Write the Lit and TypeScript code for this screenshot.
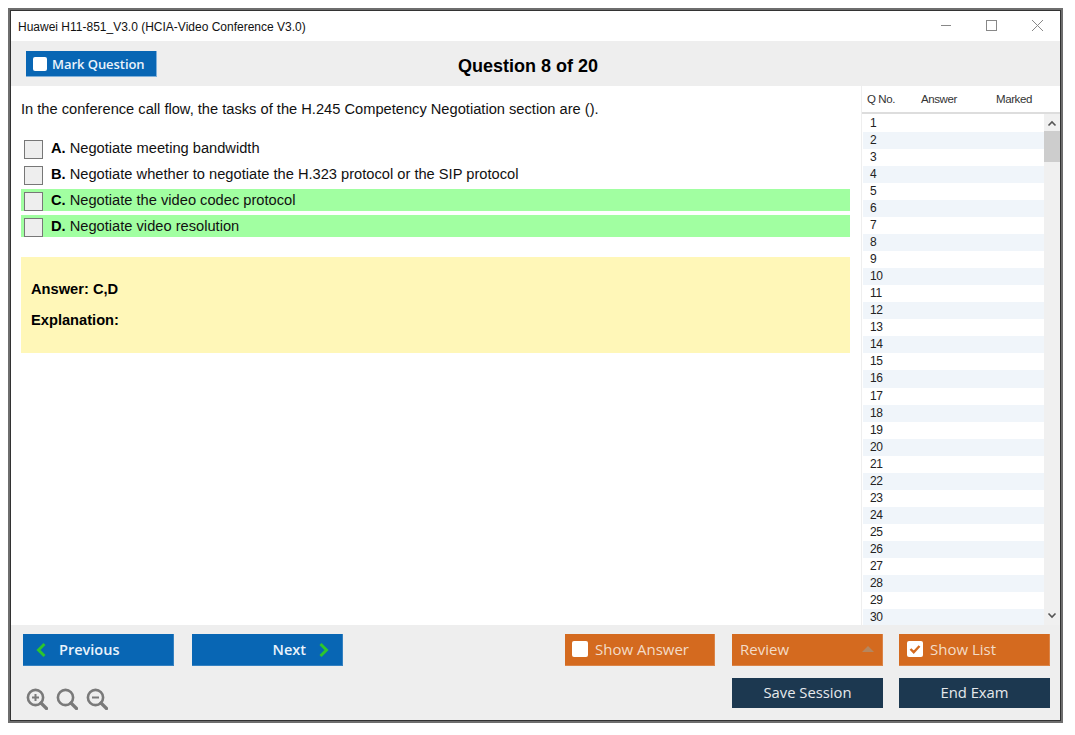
import { LitElement, html, css, svg } from "lit";
import { customElement } from "lit/decorators.js";

const magnifier = (inner: unknown) => html`<svg class="zi" width="22" height="22" viewBox="0 0 22 22" fill="none" stroke="#7a7a7a">
  <circle cx="9.5" cy="9.5" r="7.6" stroke-width="2.6"></circle>
  <path d="M15 15l5.5 5.5" stroke-width="3.2" stroke-linecap="round"></path>${inner}</svg>`;

@customElement("app-root")
export class AppRoot extends LitElement {
  static styles = css`
    :host { display: block; width: 1075px; height: 735px; background: #fff; padding: 8px 0 0 8px; box-sizing: border-box; font-family: "Liberation Sans", Arial, sans-serif; color: #111; }
    * { box-sizing: border-box; }
    .frame { width: 1055px; height: 715px; border: 2px solid #6e6e6e; }
    .win { width: 100%; height: 100%; border: 1px solid #333; display: flex; flex-direction: column; background: #fff; }
    .title { height: 30px; flex: none; display: flex; align-items: center; justify-content: space-between; padding-left: 7px; font-size: 12px; background: #fff; }
    .tt { padding-top: 2px; }
    .wc { display: flex; align-items: center; }
    .wc svg { display: block; width: 46px; height: 30px; }
    .top { height: 45px; flex: none; background: #eee; display: flex; align-items: flex-start; padding: 10px 0 0 15px; }
    .mark { width: 131px; height: 26px; flex: none; background: #0866b4; border: 1px solid #7fb0da; border-width: 0 1px 1px 0; color: #eaf3fb; display: flex; align-items: center; gap: 5px; padding-left: 7px; font: 600 13px "Open Sans", sans-serif; letter-spacing: -0.05px; }
    .cb { width: 14px; height: 14px; border-radius: 2px; background: #fff; flex: none; display: block; }
    .heading { flex: 1; margin-top: 5px; padding-right: 161px; text-align: center; font-size: 18px; font-weight: bold; color: #000; }
    .main { flex: 1; min-height: 0; display: flex; }
    .content { width: 851px; flex: none; padding: 14px 0 0 10px; border-right: 1px solid #eee; }
    .q { font-size: 14.67px; line-height: 18px; height: 18px; margin-bottom: 19px; white-space: nowrap; }
    .opts { display: flex; flex-direction: column; gap: 4px; width: 829px; }
    .opt { height: 22px; display: flex; align-items: center; padding-left: 3px; font-size: 14.67px; gap: 8px; }
    .opt.ok { background: #a1ffa1; }
    .opt b { color: #000; }
    .box { width: 19px; height: 19px; border: 1px solid #777; background: #eee; flex: none; align-self: flex-end; }
    .ans { width: 829px; height: 96px; margin-top: 20px; background: #fff7b8; padding: 23px 0 0 10px; font-size: 14.67px; font-weight: bold; color: #000; }
    .ans div { height: 18px; line-height: 18px; margin-bottom: 13px; }
    .side { flex: 1; display: flex; flex-direction: column; min-width: 0; }
    .lh { height: 28px; flex: none; display: grid; grid-template-columns: 54px 75px 1fr; align-items: center; padding-left: 5px; font-size: 11.5px; letter-spacing: -0.4px; color: #333; background: #fff; border-bottom: 2px solid #ddd; }
    .lb { flex: 1; min-height: 0; display: flex; overflow: hidden; padding-left: 1px; }
    .rows { width: 181px; flex: none; padding-top: 1px; }
    .row { height: 17.04px; line-height: 17px; font-size: 12px; letter-spacing: -0.3px; padding-left: 7px; color: #222; }
    .row:nth-child(even) { background: #f0f5fa; }
    .sb { width: 16px; flex: none; background: #f0f0f0; display: flex; flex-direction: column; align-items: center; }
    .ar { height: 17px; flex: none; display: block; }
    .thumb { width: 16px; height: 31px; background: #cdcdcd; flex: none; }
    .grow { flex: 1; }
    .foot { height: 95px; flex: none; background: #eee; display: flex; flex-direction: column; gap: 12px; padding: 9px 10px 0 12px; }
    .line { display: flex; align-items: flex-start; }
    .btn { height: 32px; flex: none; display: flex; align-items: center; font: 15px "Open Sans", sans-serif; border: 1px solid rgba(255,255,255,.18); border-width: 0 1px 1px 0; }
    .blue { background: #0866b4; color: #eaf3fb; font-weight: 600; font-size: 14.5px; width: 151px; }
    .or { background: #d46a1f; width: 151px; padding: 0 0 2px 8px; gap: 7px; color: #f3dcc8; }
    .navy { background: #1c3850; height: 30px; width: 151px; justify-content: center; color: #e6e9ec; border: 0; padding-bottom: 2px; font-size: 14.8px; }
    .prev { gap: 12px; padding-left: 12px; }
    .next { margin-left: 18px; justify-content: flex-end; gap: 12px; padding-right: 12px; }
    .sa { width: 150px; margin-left: 222px; padding-left: 7px; }
    .rv { margin-left: 17px; justify-content: space-between; padding-right: 8px; }
    .sl { margin-left: 16px; }
    .save { margin-left: auto; }
    .end { margin-left: 16px; }
    .cb2 { width: 16px; height: 16px; border-radius: 2px; background: #fff; flex: none; display: block; }
    .zoom { display: flex; gap: 8px; margin: 10px 0 0 3px; }
    .zi { display: block; }
  `;

  render() {
    const rows = Array.from({ length: 30 }, (_, i) => i + 1);
    const opts = [
      ["A.", "Negotiate meeting bandwidth", false],
      ["B.", "Negotiate whether to negotiate the H.323 protocol or the SIP protocol", false],
      ["C.", "Negotiate the video codec protocol", true],
      ["D.", "Negotiate video resolution", true],
    ] as const;
    return html`<div class="frame"><div class="win">
      <div class="title">
        <span class="tt">Huawei H11-851_V3.0 (HCIA-Video Conference V3.0)</span>
        <div class="wc">
          <svg viewBox="0 0 46 30"><path d="M19 14.5h10" stroke="#888" fill="none"></path></svg>
          <svg viewBox="0 0 46 30"><rect x="18.5" y="9.5" width="10" height="10" stroke="#888" fill="none"></rect></svg>
          <svg viewBox="0 0 46 30"><path d="M18 9l11 11M29 9L18 20" stroke="#888" fill="none"></path></svg>
        </div>
      </div>
      <div class="top">
        <div class="mark"><span class="cb"></span>Mark Question</div>
        <div class="heading">Question 8 of 20</div>
      </div>
      <div class="main">
        <div class="content">
          <div class="q">In the conference call flow, the tasks of the H.245 Competency Negotiation section are ().</div>
          <div class="opts">
            ${opts.map(([l, t, ok]) => html`<div class="opt ${ok ? "ok" : ""}"><span class="box"></span><span><b>${l}</b> ${t}</span></div>`)}
          </div>
          <div class="ans"><div>Answer: C,D</div><div>Explanation:</div></div>
        </div>
        <div class="side">
          <div class="lh"><span>Q No.</span><span>Answer</span><span>Marked</span></div>
          <div class="lb">
            <div class="rows">${rows.map((n) => html`<div class="row">${n}</div>`)}</div>
            <div class="sb">
              <svg class="ar" width="16" height="17" viewBox="0 0 16 17"><path d="M4.5 11.5L8 8l3.5 3.5" fill="none" stroke="#555" stroke-width="1.6"></path></svg>
              <div class="thumb"></div>
              <div class="grow"></div>
              <svg class="ar" width="16" height="17" viewBox="0 0 16 17"><path d="M4.5 5.5L8 9l3.5-3.5" fill="none" stroke="#555" stroke-width="1.6"></path></svg>
            </div>
          </div>
        </div>
      </div>
      <div class="foot">
        <div class="line">
          <div class="btn blue prev">
            <svg width="12" height="16" viewBox="0 0 12 16"><path d="M9.5 2L3.5 8l6 6" fill="none" stroke="#2dc52d" stroke-width="3"></path></svg>
            Previous
          </div>
          <div class="btn blue next">
            Next
            <svg width="12" height="16" viewBox="0 0 12 16"><path d="M2.5 2l6 6-6 6" fill="none" stroke="#2dc52d" stroke-width="3"></path></svg>
          </div>
          <div class="btn or sa"><span class="cb2"></span>Show Answer</div>
          <div class="btn or rv">Review
            <svg width="12" height="7" viewBox="0 0 12 7"><path d="M0 7l6-6 6 6z" fill="#b5865f"></path></svg>
          </div>
          <div class="btn or sl">
            <svg class="cb2" viewBox="0 0 16 16"><path d="M3.5 8l3.2 3.2L12.5 5" fill="none" stroke="#d46a1f" stroke-width="2.4"></path></svg>
            Show List
          </div>
        </div>
        <div class="line">
          <div class="zoom">
            ${magnifier(svg`<path d="M6 9.5h7M9.5 6v7" stroke-width="2"></path>`)}
            ${magnifier("")}
            ${magnifier(svg`<path d="M6 9.5h7" stroke-width="2"></path>`)}
          </div>
          <div class="btn navy save">Save Session</div>
          <div class="btn navy end">End Exam</div>
        </div>
      </div>
    </div></div>`;
  }
}
